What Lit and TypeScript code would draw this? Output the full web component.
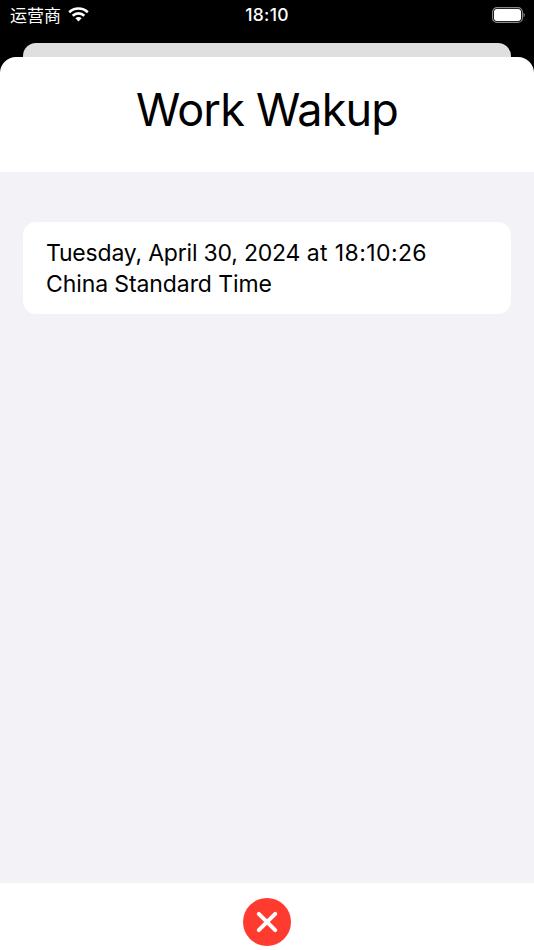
import { LitElement, html, css } from "lit";
import { customElement } from "lit/decorators.js";

@customElement("app-root")
export class AppRoot extends LitElement {
  static styles = css`
    :host {
      display: block;
      width: 534px;
      height: 950px;
      font-family: Inter, "Noto Sans", sans-serif;
      background: #000;
      overflow: hidden;
    }
    .screen { height: 950px; display: flex; flex-direction: column; }
    .status {
      height: 29px;
      color: #fff;
      display: grid;
      grid-template-columns: 1fr auto 1fr;
      align-items: center;
      flex: none;
    }
    .left { display: flex; align-items: center; gap: 7px; padding-left: 10px; font-size: 17px; font-family: "Noto Sans CJK SC", sans-serif; }
    .time { font-size: 17.5px; font-weight: 500; letter-spacing: 0.3px; }
    .right { display: flex; justify-content: flex-end; padding-right: 9px; }
    .back {
      flex: none;
      margin: 14px 23px 0;
      height: 14px;
      background: #dfdfdf;
      border-radius: 13px 13px 0 0;
    }
    .sheet {
      flex: 1;
      min-height: 0;
      background: #fff;
      border-radius: 16px 16px 0 0;
      display: flex;
      flex-direction: column;
      overflow: hidden;
    }
    .header {
      flex: none;
      height: 115px;
      box-sizing: border-box;
      padding-bottom: 11px;
      display: flex;
      align-items: center;
      justify-content: center;
      font-size: 45px;
      color: #000;
      letter-spacing: -0.8px;
    }
    .content { flex: 1; background: #f2f2f7; padding: 50px 23px 0; }
    .card {
      background: #fff;
      border-radius: 13px;
      padding: 16px 23px 15px;
      height: 92px;
      box-sizing: border-box;
      font-size: 23px;
      line-height: 31px;
      color: #000;
    }
    .date { letter-spacing: -0.2px; }
    .clock { letter-spacing: 0.4px; }
    .zone { letter-spacing: -0.1px; }
    .footer {
      flex: none;
      height: 67px;
      box-sizing: border-box;
      padding-top: 15px;
      display: flex;
      justify-content: center;
      align-items: flex-start;
    }
    .close { display: block; width: 48px; height: 48px; }
    svg { display: block; }
  `;

  render() {
    return html`
      <div class="screen">
        <div class="status">
          <div class="left">
            <span>运营商</span>
            <svg width="21" height="15" viewBox="0 0 21 15" fill="none" stroke="#fff">
              <path d="M1.200 5.200C6.400.200 14.600.200 19.800 5.200" stroke-width="2.600"/>
              <path d="M4.700 8.700C8 5.600 13 5.600 16.300 8.700" stroke-width="2.600"/>
              <path d="M7.400 11.200C9.200 9.700 11.800 9.700 13.600 11.200L10.500 14.500Z" fill="#fff" stroke="none"/>
            </svg>
          </div>
          <div class="time">18:10</div>
          <div class="right">
            <svg width="33" height="16" viewBox="0 0 33 16">
              <rect x="0.600" y="0.600" width="29.800" height="14.800" rx="4.500" fill="none" stroke="#8a8a8a" stroke-width="1.200"/>
              <rect x="2" y="2" width="27" height="12" rx="3" fill="#fff"/>
              <path d="M31.500 5.700c.8.300 1.200 1.100 1.200 2.300s-.4 2-1.200 2.300z" fill="#8a8a8a"/>
            </svg>
          </div>
        </div>
        <div class="back"></div>
        <div class="sheet">
          <div class="header">Work Wakup</div>
          <div class="content">
            <div class="card"><span class="date">Tuesday, April 30, 2024</span> <span class="clock">at 18:10:26</span><br /><span class="zone">China Standard Time</span></div>
          </div>
          <div class="footer">
            <svg class="close" viewBox="0 0 48 48">
              <circle cx="24" cy="24" r="24" fill="#ff3b30"/>
              <path d="M15.800 15.800L32.200 32.200M32.200 15.800L15.800 32.200" stroke="#fff" stroke-width="4" stroke-linecap="round"/>
            </svg>
          </div>
        </div>
      </div>
    `;
  }
}
